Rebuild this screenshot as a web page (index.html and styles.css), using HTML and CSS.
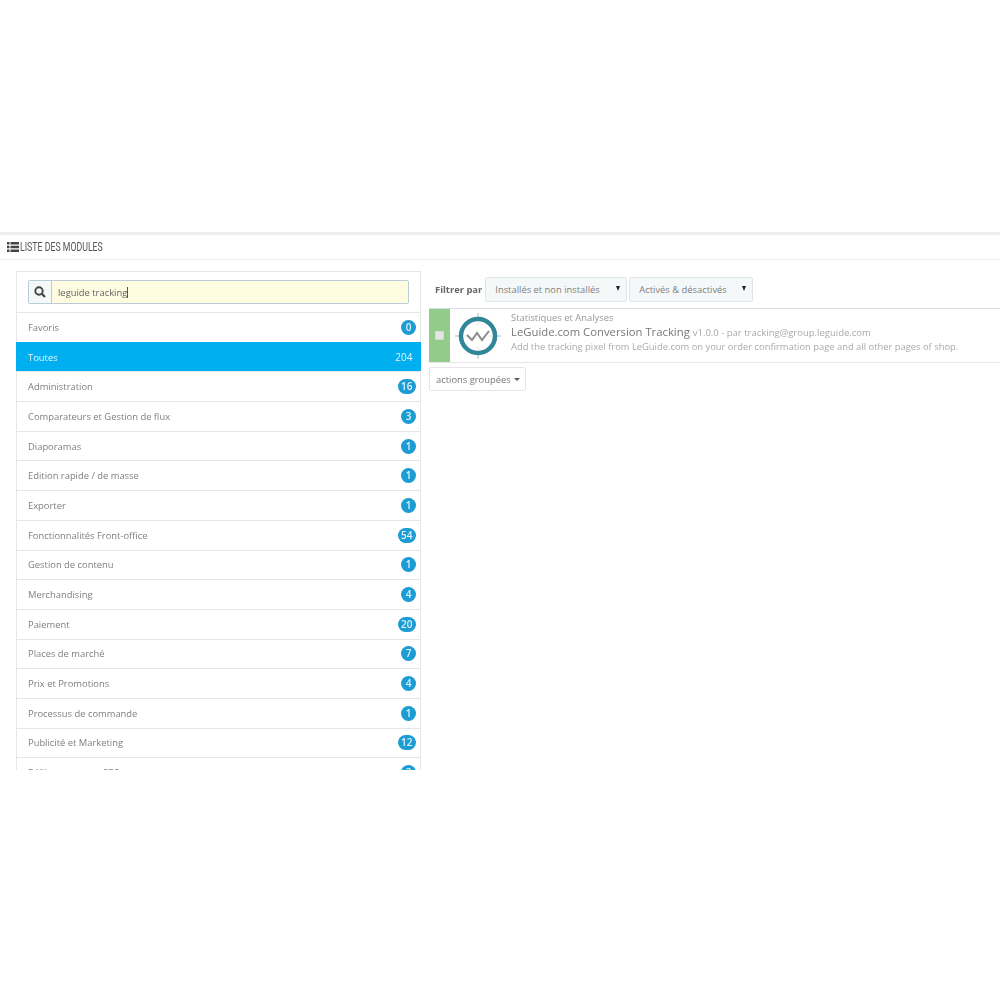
FILE: index.html
```html
<!DOCTYPE html>
<html>

<head>
    <title>Liste des modules</title>
    <link rel="stylesheet" href="styles.css">
</head>

<body>
    <div class="panel">
        <div class="panel-heading">
            <svg class="list-icon" width="12" height="10" viewBox="0 0 12 10">
                <path d="M0 0h2.5v2.5H0zM3.5 0H12v2.5H3.5zM0 3.7h2.5v2.5H0zM3.5 3.7H12v2.5H3.5zM0 7.4h2.5v2.5H0zM3.5 7.4H12v2.5H3.5z" fill="#444" />
            </svg>
            <span class="panel-title">LISTE DES MODULES</span>
        </div>
        <div class="columns">
            <div class="categories">
                <div class="search-box">
                    <div class="search">
                        <div class="search-addon">
                            <svg width="12" height="12" viewBox="0 0 12 12">
                                <circle cx="5" cy="5" r="3.7" fill="none" stroke="#444" stroke-width="1.9" />
                                <path d="M7.8 7.8L11 11" stroke="#444" stroke-width="2.2" />
                            </svg>
                        </div>
                        <div class="search-input">leguide tracking<span class="caret"></span></div>
                    </div>
                </div>
                <ul class="category-list">
                    <li><span>Favoris</span><b class="badge">0</b></li>
                    <li class="active"><span>Toutes</span><b class="badge">204</b></li>
                    <li><span>Administration</span><b class="badge">16</b></li>
                    <li><span>Comparateurs et Gestion de flux</span><b class="badge">3</b></li>
                    <li><span>Diaporamas</span><b class="badge">1</b></li>
                    <li><span>Edition rapide / de masse</span><b class="badge">1</b></li>
                    <li><span>Exporter</span><b class="badge">1</b></li>
                    <li><span>Fonctionnalités Front-office</span><b class="badge">54</b></li>
                    <li><span>Gestion de contenu</span><b class="badge">1</b></li>
                    <li><span>Merchandising</span><b class="badge">4</b></li>
                    <li><span>Paiement</span><b class="badge">20</b></li>
                    <li><span>Places de marché</span><b class="badge">7</b></li>
                    <li><span>Prix et Promotions</span><b class="badge">4</b></li>
                    <li><span>Processus de commande</span><b class="badge">1</b></li>
                    <li><span>Publicité et Marketing</span><b class="badge">12</b></li>
                    <li><span>Référencement - SEO</span><b class="badge">3</b></li>
                </ul>
            </div>
            <div class="modules">
                <div class="filters">
                    <label class="filter-label">Filtrer par</label>
                    <div class="select select-install">Installés et non installés<i class="arrow"></i></div>
                    <div class="select select-active">Activés &amp; désactivés<i class="arrow"></i></div>
                </div>
                <div class="module-row">
                    <div class="module-check"><span class="checkbox"></span></div>
                    <svg class="module-icon" width="46" height="46" viewBox="0 0 46 46">
                        <path d="M23 0v46M0 23h46" stroke="#c3d6de" stroke-width="1.5" />
                        <circle cx="23" cy="23" r="17" fill="#fff" stroke="#2f8798" stroke-width="4.5" />
                        <path d="M23 8v5M23 33v5M8 23h5M33 23h5" stroke="#dfe8ec" stroke-width="1.2" />
                        <path d="M12 22l5 5 5-7 5 7 7-9" fill="none" stroke="#8f8a8c" stroke-width="2" />
                    </svg>
                    <div class="module-info">
                        <div class="module-cat">Statistiques et Analyses</div>
                        <div class="module-title">LeGuide.com Conversion Tracking <small>v1.0.0 - par tracking@group.leguide.com</small></div>
                        <div class="module-desc">Add the tracking pixel from LeGuide.com on your order confirmation page and all other pages of shop.</div>
                    </div>
                </div>
                <div class="bulk-btn">actions groupées<i class="caret-down"></i></div>
            </div>
        </div>
    </div>
</body>

</html>
```

FILE: styles.css
```css
body {
    background-color: white;
    font-family: 'Open Sans', sans-serif;
    color: #777;
    margin: 0;
    padding: 232px 0 0;
}

.panel {
    border-top: 3px solid #eee;
    filter: blur(0.45px);
}

.panel-heading {
    display: flex;
    align-items: center;
    gap: 1px;
    height: 24px;
    padding-left: 7px;
    border-bottom: 1px solid #f0f0f0;
    font-family: 'Roboto', sans-serif;
    font-size: 12px;
    color: #555;
}

/* no condensed face is installed, so squeeze the title */
.panel-title {
    transform: scaleX(0.73);
    transform-origin: left center;
}

.columns {
    display: flex;
    align-items: flex-start;
    padding: 11px 0 0 16px;
}

/* left column */
.categories {
    width: 405px;
    height: 499px;
    overflow: hidden;
    flex-shrink: 0;
}

.search-box {
    padding: 8px 11px;
    border: 1px solid #e4e6e8;
    border-bottom: none;
}

.search {
    display: flex;
    box-sizing: border-box;
    height: 24px;
    border: 1px solid #b9cdd4;
    border-radius: 2px;
}

.search-addon {
    display: flex;
    align-items: center;
    justify-content: center;
    box-sizing: border-box;
    width: 23px;
    background-color: #f5f8f9;
    border-right: 1px solid #b9cdd4;
}

.search-input {
    flex: 1;
    padding-left: 6px;
    background-color: #fffbe0;
    font-size: 9.4px;
    line-height: 23px;
    color: #666;
}

.caret {
    display: inline-block;
    width: 1px;
    height: 11px;
    vertical-align: -2px;
    background-color: #555;
}

.category-list {
    list-style: none;
    margin: 0;
    padding: 0;
}

.category-list li {
    display: flex;
    align-items: center;
    justify-content: space-between;
    box-sizing: border-box;
    height: 29.7px;
    padding: 0 4px 0 11px;
    border: 1px solid #e4e6e8;
    border-bottom: none;
    font-size: 9.4px;
    color: #808080;
}

.category-list li.active {
    background-color: #00aff0;
    border-color: #00aff0;
    color: #e6f7fe;
}

.badge {
    min-width: 8px;
    padding: 0 3.5px;
    border-radius: 8px;
    background-color: #1c9cd4;
    color: #dff3fb;
    font-size: 10px;
    font-weight: 600;
    line-height: 15px;
    text-align: center;
}

.active .badge {
    background: none;
    font-weight: 400;
}

/* right column */
.modules {
    flex: 1;
    min-width: 0;
    margin-left: 8px;
}

.filters {
    display: flex;
    align-items: center;
    gap: 2px;
    height: 25px;
    margin-top: 6px;
}

.filter-label {
    margin: 0 1px 0 6px;
    font-size: 9.4px;
    font-weight: 700;
    color: #666;
}

.select {
    position: relative;
    box-sizing: border-box;
    height: 25px;
    padding-left: 9px;
    border: 1px solid #dfe5e8;
    border-radius: 2px;
    background-color: #f5f8f9;
    font-size: 9.4px;
    line-height: 24px;
    color: #808080;
}

.select-install {
    width: 142px;
}

.select-active {
    width: 124px;
}

.arrow {
    position: absolute;
    top: 8px;
    right: 6px;
    border-top: 5px solid #222;
    border-left: 2.5px solid transparent;
    border-right: 2.5px solid transparent;
}

.module-row {
    display: flex;
    align-items: center;
    box-sizing: border-box;
    height: 55px;
    margin-top: 6px;
    border-top: 1px solid #d5dee3;
    border-bottom: 1px solid #e8e8e8;
}

.module-check {
    display: flex;
    align-items: center;
    justify-content: center;
    align-self: stretch;
    width: 21px;
    background-color: #93cb8b;
}

.checkbox {
    width: 7px;
    height: 7px;
    background-color: #e4e6e4;
    border: 1px solid #d5d8d5;
}

.module-icon {
    margin: 0 10px 0 5px;
    flex-shrink: 0;
}

.module-info {
    white-space: nowrap;
    margin-top: -7px;
}

.module-cat {
    font-size: 9.4px;
    line-height: 12px;
    color: #999;
}

.module-title {
    font-size: 11.3px;
    line-height: 15px;
    color: #777;
}

.module-title small {
    font-size: 9.5px;
    color: #aaa;
}

.module-desc {
    font-size: 9.4px;
    line-height: 13px;
    color: #aaa;
}

.bulk-btn {
    display: flex;
    align-items: center;
    box-sizing: border-box;
    width: 97px;
    height: 24px;
    margin-top: 4px;
    padding-left: 6px;
    border: 1px solid #e6e6e6;
    border-radius: 2px;
    font-size: 9.4px;
    color: #777;
}

.caret-down {
    margin-left: 3px;
    border-top: 3px solid #555;
    border-left: 3px solid transparent;
    border-right: 3px solid transparent;
}
```
